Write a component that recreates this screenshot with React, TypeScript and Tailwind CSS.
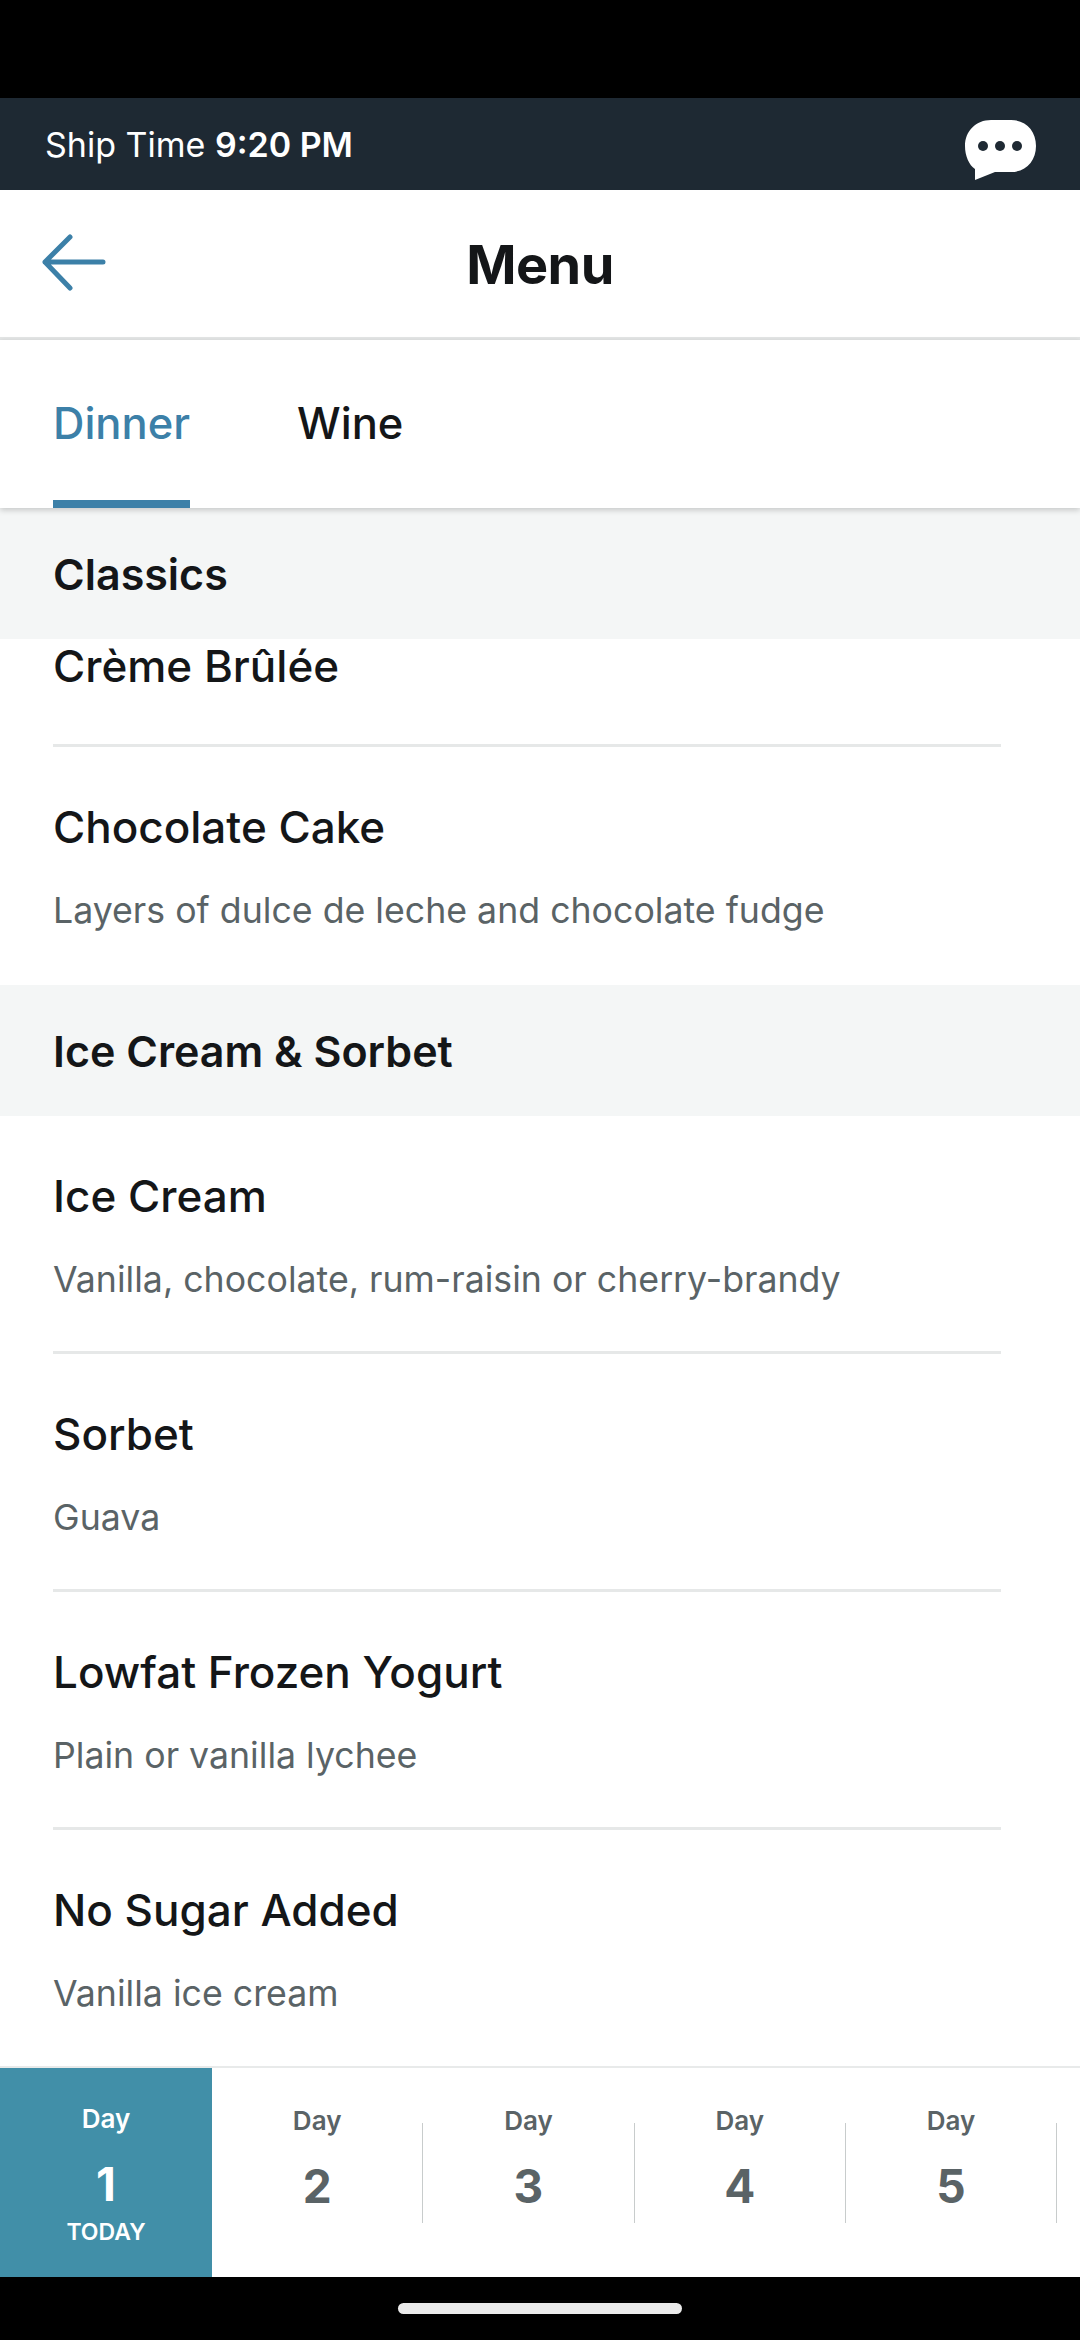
import React from 'react';

const fontStack = { fontFamily: 'Inter, "Noto Sans", sans-serif' };

function SectionHeader({ title }: { title: string }) {
  return (
    <div className="flex h-[131px] items-center bg-[#f4f6f6] px-[53px] pt-[1px] text-[43px] leading-none font-semibold text-[#141618]">
      {title}
    </div>
  );
}

function MenuItem({ title, desc, last }: { title: string; desc: string; last?: boolean }) {
  return (
    <div className="mx-[53px] mr-[79px] flex h-[238px] flex-col border-b-[3px] border-[#e6e8e8] pt-[54px]" style={last ? { borderBottomWidth: 0 } : undefined}>
      <div className="text-[44px] leading-[52px] font-medium text-[#141618]">{title}</div>
      <div className="mt-[31px] text-[35.7px] leading-[52px] text-[#5a6366]">{desc}</div>
    </div>
  );
}

function DayTab({ day }: { day: number }) {
  return (
    <div className="flex h-[100px] w-[211.3px] shrink-0 flex-col items-center border-r border-[#c8cccc] text-[#5a6366]">
      <div className="-mt-[17px] text-[26px] leading-[30px] font-semibold">Day</div>
      <div className="mt-[24px] text-[46px] leading-[52px] font-bold">{day}</div>
    </div>
  );
}

export default function App() {
  return (
    <div className="flex h-[2340px] w-[1080px] flex-col overflow-hidden bg-black" style={fontStack}>
      <div className="h-[98px] shrink-0" />

      <div className="flex h-[92px] shrink-0 items-center justify-between bg-[#1e2933] pt-[1px] pr-[43px] pl-[45px] text-[34px] text-white">
        <div>
          Ship Time <span className="font-semibold">9:20 PM</span>
        </div>
        <svg width="72" height="60" viewBox="0 0 72 60" className="mt-[11px]">
          <path d="M26 0h20c15 0 25 11 25 26s-10 26-25 26H30L10 60V49C4 45 0 36 0 26 0 11 11 0 26 0z" fill="#fff" />
          <circle cx="18" cy="26" r="5" fill="#1e2933" />
          <circle cx="35" cy="26" r="5" fill="#1e2933" />
          <circle cx="52" cy="26" r="5" fill="#1e2933" />
        </svg>
      </div>

      <div className="grid h-[150px] shrink-0 grid-cols-[1fr_auto_1fr] items-center border-b-[3px] border-[#e4e6e6] bg-white">
        <svg width="70" height="60" viewBox="0 0 70 60" className="mb-[3px] ml-[40px]">
          <path d="M5 30h58M30 5L5 30l25 26" fill="none" stroke="#3c80a8" strokeWidth="5" strokeLinecap="round" strokeLinejoin="round" />
        </svg>
        <div className="pt-[2px] text-[54px] leading-none font-bold tracking-[-0.5px] text-[#141618]">Menu</div>
        <div />
      </div>

      <div className="relative z-10 flex h-[168px] shrink-0 gap-[107px] bg-white px-[53px] text-[43.5px] font-medium shadow-[0_2px_6px_rgba(0,0,0,0.2)]">
        <div className="flex items-center border-b-[8px] border-[#3c80a8] pt-[8px] text-[#3c80a8]">Dinner</div>
        <div className="flex items-center border-b-[8px] border-transparent pt-[8px] text-[#141618]">Wine</div>
      </div>

      <div className="flex-1 overflow-hidden bg-white">
        <SectionHeader title="Classics" />
        <div className="mr-[79px] ml-[53px] h-[108px] border-b-[3px] border-[#e6e8e8] pt-[1px] text-[44px] leading-[52px] font-medium text-[#141618]">
          Crème Brûlée
        </div>
        <MenuItem title="Chocolate Cake" desc="Layers of dulce de leche and chocolate fudge" last />
        <SectionHeader title="Ice Cream &amp; Sorbet" />
        <MenuItem title="Ice Cream" desc="Vanilla, chocolate, rum-raisin or cherry-brandy" />
        <MenuItem title="Sorbet" desc="Guava" />
        <MenuItem title="Lowfat Frozen Yogurt" desc="Plain or vanilla lychee" />
        <MenuItem title="No Sugar Added" desc="Vanilla ice cream" last />
      </div>

      <div className="flex h-[211px] shrink-0 items-center overflow-hidden border-t-2 border-[#e8eaea] bg-white">
        <div className="flex h-full w-[212px] shrink-0 flex-col items-center bg-[#418fa8] pt-[36px] text-white">
          <div className="text-[26px] leading-[30px] font-semibold">Day</div>
          <div className="mt-[24px] text-[46px] leading-[52px] font-bold">1</div>
          <div className="mt-[8px] text-[23px] leading-[28px] font-semibold">TODAY</div>
        </div>
        {[2, 3, 4, 5].map((d) => (
          <DayTab key={d} day={d} />
        ))}
      </div>

      <div className="flex h-[63px] shrink-0 justify-center pt-[26px]">
        <div className="h-[11px] w-[284px] rounded-full bg-[#ebebeb]" />
      </div>
    </div>
  );
}
